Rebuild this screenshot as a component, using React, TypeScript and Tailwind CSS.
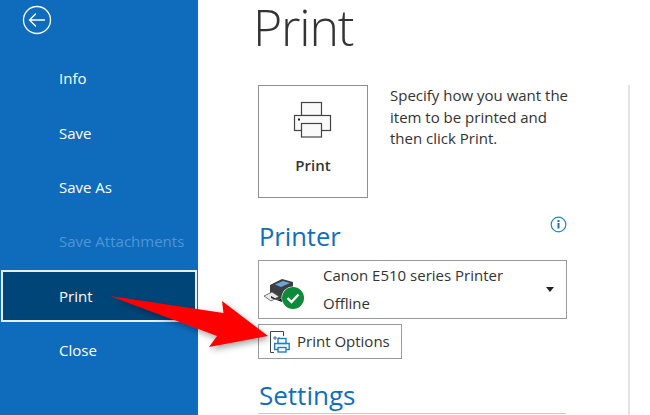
import React from "react";

const font = { fontFamily: '"Open Sans", "Noto Sans", sans-serif' };

function NavItem({ label, dim, active }: { label: string; dim?: boolean; active?: boolean }) {
  if (active) {
    return (
      <div className="flex h-[54.3px] items-center px-px">
        <div className="flex h-[52px] w-full items-center border-2 border-[#e8eef4] bg-[#004578] pl-[56px] text-[15px] text-white">
          {label}
        </div>
      </div>
    );
  }
  return (
    <div className={"flex h-[54.3px] items-center pl-[59px] text-[15px] " + (dim ? "text-[#4f95d3]" : "text-white")}>
      {label}
    </div>
  );
}

function PrinterIcon() {
  return (
    <svg width="40" height="40" viewBox="1 0 40 40" fill="none" stroke="#444" strokeWidth="1.2">
      <rect x="9.5" y="2.5" width="20" height="13" fill="#fafafa" />
      <rect x="2.5" y="15.5" width="36" height="15" fill="#fafafa" />
      <rect x="9.5" y="23.5" width="20" height="13.5" fill="#fafafa" />
      <rect x="6" y="18.5" width="2" height="2" fill="#222" stroke="none" />
    </svg>
  );
}

function CanonIcon() {
  return (
    <svg className="mt-[8px]" width="42" height="35" viewBox="0 0 42 35">
      <path d="M6 9 L18 3 L29 6 L29 16 L14 24 L6 19 Z" fill="#3c3f42" />
      <path d="M11 8.5 L19 5 L26 7 L17 11 Z" fill="#6aa5d8" />
      <path d="M0 20 L8 16 L15 20.5 L7 25 Z" fill="#e8e8e8" stroke="#555" strokeWidth="0.8" />
      <path d="M7 22 L18 26 L22 24 L22 20 L14 24 L7 20 Z" fill="#1e1e1e" />
      <circle cx="29" cy="22" r="11.5" fill="#fff" />
      <circle cx="29" cy="22" r="11" fill="#0e8a3a" />
      <path d="M23.5 22 L27.5 26 L34.5 18.5" fill="none" stroke="#fff" strokeWidth="2.4" />
    </svg>
  );
}

function OptionsIcon() {
  return (
    <svg width="22" height="24" viewBox="0 0 22 24" fill="none">
      <path d="M6 22.5 H2.5 V1.5 H15.5 V6" stroke="#444" strokeWidth="1" />
      <path d="M6 7 H8 V9 H6 Z M10 8 H12" stroke="#666" strokeWidth="1" />
      <rect x="10" y="8.5" width="8" height="5" stroke="#1e7fc9" strokeWidth="1.4" />
      <rect x="6.7" y="13.5" width="14.5" height="6" stroke="#1e7fc9" strokeWidth="1.4" />
      <rect x="10" y="17.5" width="8" height="4.5" fill="#fff" stroke="#1e7fc9" strokeWidth="1.4" />
    </svg>
  );
}

export default function App() {
  return (
    <div className="relative flex h-[415px] w-[650px] overflow-hidden bg-white" style={font}>
      <aside className="w-[198px] shrink-0 bg-[#0f6cbd]">
        <div className="flex h-[51.5px] items-start pl-[22px] pt-[5px]">
          <svg width="30" height="30" viewBox="0 0 30 30" fill="none" stroke="#fff" strokeLinecap="round">
            <circle cx="15" cy="15" r="13.5" strokeWidth="1.3" />
            <path d="M22.5 15 H7.5 M13.5 9 L7.5 15 L13.5 21" strokeWidth="1.3" />
          </svg>
        </div>
        <NavItem label="Info" />
        <NavItem label="Save" />
        <NavItem label="Save As" />
        <NavItem label="Save Attachments" dim />
        <NavItem label="Print" active />
        <NavItem label="Close" />
      </aside>

      <main className="flex min-w-0 flex-1 flex-col pl-[60px]">
        <h1 className="-ml-[5px] h-[85px] text-[50px] leading-[54px] font-light tracking-[-1.2px] text-[#333]">Print</h1>
        <div className="flex">
          <div className="w-[370px]">
            <div className="flex items-start">
              <div className="flex h-[113px] w-[110px] shrink-0 flex-col items-center border border-[#8f8f8f] pt-[14px]">
                <PrinterIcon />
                <span className="mt-[15px] text-[15px] leading-[20px] font-semibold text-[#333]">Print</span>
              </div>
              <p className="ml-[22px] w-[190px] text-[15px] leading-[21.5px] text-[#333]">
                Specify how you want the item to be printed and then click Print.
              </p>
            </div>
            <div className="flex h-[62px] w-[309px] items-center justify-between pl-px pt-[13px]">
              <span className="text-[25.5px] leading-[36px] text-[#106ebe]">Printer</span>
              <svg className="-mt-[23px]" width="17" height="17" viewBox="0 0 17 17" fill="none">
                <circle cx="8.5" cy="8.5" r="7.3" stroke="#1e86d6" strokeWidth="1.2" />
                <rect x="7.5" y="7" width="2" height="5.5" fill="#1e6fb5" />
                <rect x="7.5" y="4" width="2" height="2" fill="#1e6fb5" />
              </svg>
            </div>
            <div className="flex h-[59px] w-[309px] items-center border border-[#9a9a9a] pl-[5px] pr-[12px]">
              <CanonIcon />
              <div className="ml-[17px] -mt-[2px] flex-1 text-[15px] leading-[28px] text-[#333]">
                <div>Canon E510 series Printer</div>
                <div>Offline</div>
              </div>
              <div className="h-0 w-0 border-x-[4.5px] border-t-[5px] border-x-transparent border-t-[#222]" />
            </div>
            <div className="mt-[5px] flex h-[35px] w-[144px] items-center border border-[#9a9a9a] pl-[9px] text-[15px] text-[#333]">
              <OptionsIcon />
              <span className="ml-[7px]">Print Options</span>
            </div>
            <div className="mt-[18px] pl-px text-[26px] leading-[36px] text-[#106ebe]">Settings</div>
            <div className="h-px w-[308px] bg-[#b8d0e3]" />
          </div>
          <div className="h-[330px] w-[2px] bg-[#e3e3e3]" />
        </div>
      </main>

      <svg className="pointer-events-none absolute left-[100px] top-[285px]" width="185" height="75" viewBox="100 285 185 75">
        <defs>
          <filter id="s" x="-20%" y="-30%" width="140%" height="170%">
            <feDropShadow dx="2" dy="3" stdDeviation="3" floodColor="#000" floodOpacity="0.35" />
          </filter>
        </defs>
        <polygon points="110,296 223.5,313 222,301 268,336 209,347 217,336" fill="#ff0000" filter="url(#s)" />
      </svg>
    </div>
  );
}
